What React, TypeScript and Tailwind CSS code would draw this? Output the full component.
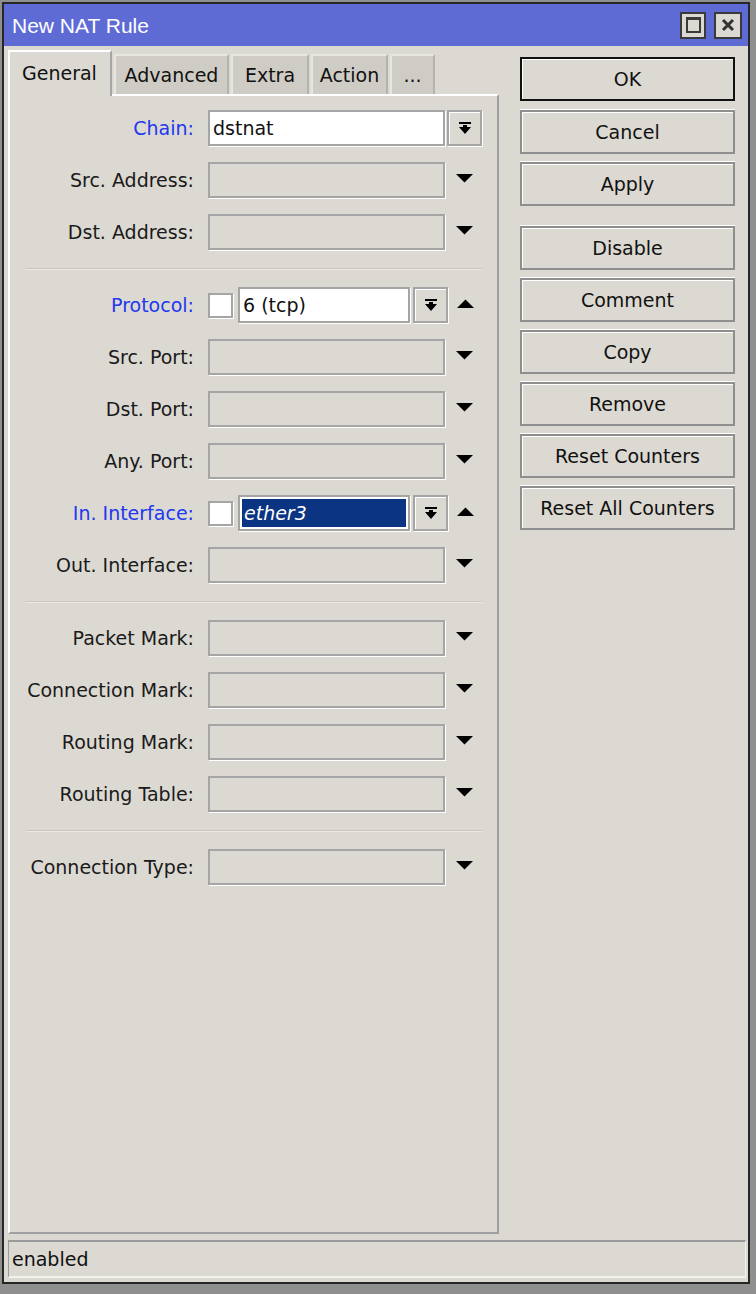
import React from 'react';

type Row =
  | { kind: 'row'; label: string; blue?: boolean; value?: string; variant: 'select' | 'empty' | 'check' | 'checkSel' }
  | { kind: 'sep' };

const rows: Row[] = [
  { kind: 'row', label: 'Chain:', blue: true, value: 'dstnat', variant: 'select' },
  { kind: 'row', label: 'Src. Address:', variant: 'empty' },
  { kind: 'row', label: 'Dst. Address:', variant: 'empty' },
  { kind: 'sep' },
  { kind: 'row', label: 'Protocol:', blue: true, value: '6 (tcp)', variant: 'check' },
  { kind: 'row', label: 'Src. Port:', variant: 'empty' },
  { kind: 'row', label: 'Dst. Port:', variant: 'empty' },
  { kind: 'row', label: 'Any. Port:', variant: 'empty' },
  { kind: 'row', label: 'In. Interface:', blue: true, value: 'ether3', variant: 'checkSel' },
  { kind: 'row', label: 'Out. Interface:', variant: 'empty' },
  { kind: 'sep' },
  { kind: 'row', label: 'Packet Mark:', variant: 'empty' },
  { kind: 'row', label: 'Connection Mark:', variant: 'empty' },
  { kind: 'row', label: 'Routing Mark:', variant: 'empty' },
  { kind: 'row', label: 'Routing Table:', variant: 'empty' },
  { kind: 'sep' },
  { kind: 'row', label: 'Connection Type:', variant: 'empty' },
];

const buttons = ['OK', 'Cancel', 'Apply', 'Disable', 'Comment', 'Copy', 'Remove', 'Reset Counters', 'Reset All Counters'];

function DownArrow() {
  return (
    <svg width="17" height="9" viewBox="0 0 17 9" className="-mt-[3px]">
      <path d="M0 0H17L8.5 8.5Z" fill="#000" />
    </svg>
  );
}

function UpArrow() {
  return (
    <svg width="17" height="9" viewBox="0 0 17 9" className="-mt-[3px]">
      <path d="M0 9H17L8.5 0.5Z" fill="#000" />
    </svg>
  );
}

function DropButton() {
  return (
    <div className="w-[35px] h-[36px] border-2 border-[#a5a5a5] shadow-[inset_1px_1px_0_#fff,1px_1px_0_#fff] flex items-center justify-center">
      <svg width="14" height="13" viewBox="0 0 14 13">
        <rect x="1" y="0" width="12" height="2" fill="#000" />
        <rect x="5" y="3" width="4" height="3" fill="#000" />
        <path d="M1 5H13L7 12Z" fill="#000" />
      </svg>
    </div>
  );
}

function FieldRow({ r }: { r: Extract<Row, { kind: 'row' }> }) {
  return (
    <div className="h-[52px] flex items-center">
      <div className={`w-[184px] text-right ${r.blue ? 'text-[#2138f0]' : 'text-[#1a1a1a]'}`}>{r.label}</div>
      <div className="ml-[14px] flex items-center">
        {r.variant === 'select' && (
          <>
            <div className="w-[237px] h-[36px] bg-white border-2 border-[#a5a5a5] shadow-[1px_1px_0_#fff] flex items-center pl-[3px] text-[#111]">
              {r.value}
            </div>
            <div className="ml-[2px]">
              <DropButton />
            </div>
          </>
        )}
        {r.variant === 'empty' && (
          <>
            <div className="w-[237px] h-[36px] border-2 border-[#a5a5a5] shadow-[1px_1px_0_#fff]" />
            <div className="ml-[11px]">
              <DownArrow />
            </div>
          </>
        )}
        {(r.variant === 'check' || r.variant === 'checkSel') && (
          <>
            <div className="w-[25px] h-[25px] bg-white border-2 border-[#a5a5a5] shadow-[1px_1px_0_#fff]" />
            <div
              className={`ml-[5px] w-[172px] h-[36px] border-2 border-[#a5a5a5] shadow-[1px_1px_0_#fff] flex items-center bg-white ${
                r.variant === 'checkSel' ? 'p-[2px]' : 'pl-[3px] text-[#111]'
              }`}
            >
              {r.variant === 'checkSel' ? (
                <div className="w-full h-full bg-[#0b3482] text-white italic flex items-center pl-[2px]">{r.value}</div>
              ) : (
                r.value
              )}
            </div>
            <div className="ml-[3px]">
              <DropButton />
            </div>
            <div className="ml-[9px]">
              <UpArrow />
            </div>
          </>
        )}
      </div>
    </div>
  );
}

export default function App() {
  return (
    <div className="w-[756px] h-[1294px] bg-[#8f8f8f] font-['DejaVu_Sans',sans-serif] text-[19px] leading-none overflow-hidden">
      <div className="ml-[2px] mt-[2px] w-[748px] border-2 border-[#262626] bg-[#dcd9d2] flex flex-col">
        {/* title bar */}
        <div className="h-[42px] bg-[#5f6bd5] flex items-center justify-between pl-[8px] pr-[6px]">
          <span className="text-white text-[21px] font-['Liberation_Sans',sans-serif] whitespace-nowrap">New NAT Rule</span>
          <div className="flex gap-[8px] items-center">
            <div className="w-[26px] h-[27px] bg-[#dcd9d2] border-2 border-[#3a3a3a] flex items-center justify-center">
              <div className="w-[15px] h-[16px] border-2 border-[#3a3a3a] border-t-[3px]" />
            </div>
            <div className="w-[28px] h-[27px] bg-[#dcd9d2] border-2 border-[#3a3a3a] flex items-center justify-center">
              <svg width="14" height="14" viewBox="0 0 14 14">
                <path d="M2 2L12 12M12 2L2 12" stroke="#333" strokeWidth="3" />
              </svg>
            </div>
          </div>
        </div>

        {/* body */}
        <div className="flex pl-[4px] pt-[4px]">
          {/* left column */}
          <div className="w-[491px] flex flex-col">
            <div className="h-[44px] flex items-end relative z-10">
              <div className="w-[104px] h-[46px] -mb-[2px] bg-[#dcd9d2] border-l-2 border-t-2 border-white border-r-2 border-r-[#a5a5a5] flex items-start pt-[12px] pl-[12px] text-[#111]">
                General
              </div>
              {[
                { t: 'Advanced', w: 'w-[115px]' },
                { t: 'Extra', w: 'w-[78px]' },
                { t: 'Action', w: 'w-[77px]' },
                { t: '...', w: 'w-[45px]' },
              ].map((tab) => (
                <div
                  key={tab.t}
                  className={`${tab.w} h-[40px] ml-[2px] bg-[#cfccc5] border-l-2 border-t-2 border-[#e8e6e1] border-r-2 border-r-[#b5b3ad] flex items-center justify-center text-[#111]`}
                >
                  {tab.t}
                </div>
              ))}
            </div>
            <div className="h-[1140px] border-l-2 border-t-2 border-white border-r-2 border-r-[#a0a0a0] border-b-2 border-b-[#a0a0a0] pt-[6px]">
              {rows.map((r, i) =>
                r.kind === 'sep' ? (
                  <div key={i} className="h-[21px] flex items-center pl-[16px] pr-[15px]">
                    <div className="w-full h-[2px] border-t border-[#c9c6bf] border-b border-b-[#ebe9e4]" />
                  </div>
                ) : (
                  <FieldRow key={i} r={r} />
                ),
              )}
            </div>
          </div>

          {/* right column */}
          <div className="ml-[21px] w-[215px] pt-[7px] flex flex-col">
            {buttons.map((b, i) => (
              <div
                key={b}
                className={`h-[44px] flex items-center justify-center text-[#111] ${
                  i === 0
                    ? 'border-2 border-[#111] shadow-[inset_1px_1px_0_#fff]'
                    : 'border-2 border-[#8e8e8e] shadow-[inset_1px_1px_0_#fff,0_-1px_0_#fff]'
                } ${i === 1 ? 'mt-[9px]' : i === 3 ? 'mt-[20px]' : i > 0 ? 'mt-[8px]' : ''}`}
              >
                {b}
              </div>
            ))}
          </div>
        </div>

        {/* status bar */}
        <div className="mt-[6px] mb-[4px] ml-[4px] mr-[2px] h-[38px] border-t-2 border-l border-[#9a9a9a] border-b-2 border-b-[#f2f1ee] border-r border-r-[#f2f1ee] flex items-center pl-[3px] text-[#111]">
          enabled
        </div>
      </div>
    </div>
  );
}
